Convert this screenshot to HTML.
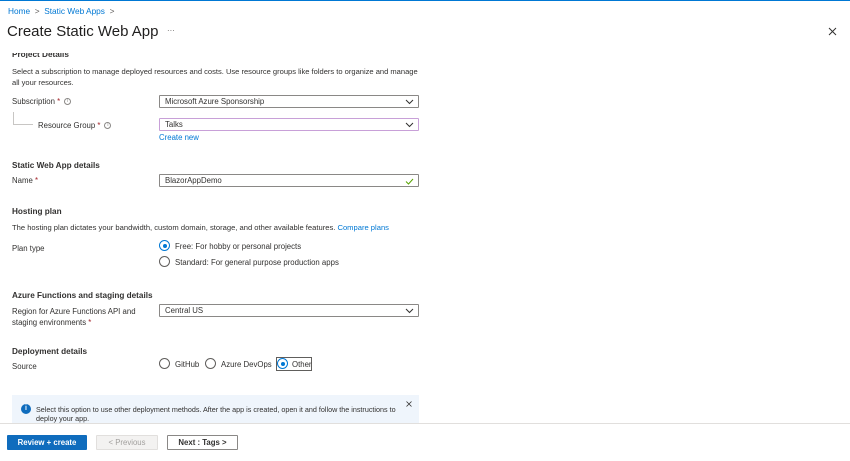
<!DOCTYPE html><html><head><style>
*{margin:0;padding:0;box-sizing:border-box}
body{width:850px;height:461px;overflow:hidden;background:#fff;font-family:"Liberation Sans",sans-serif;color:#323130;position:relative;font-size:7.8px}
.a{position:absolute;white-space:nowrap}
.h{font-weight:bold;font-size:8.2px}
.dd{position:absolute;left:159px;width:260px;height:13px;border:1px solid #8a8886;border-radius:1px;padding-left:5px;line-height:11px;font-size:7.8px}
.dd svg{position:absolute;right:4px;top:3px}
.r{position:absolute;width:11px;height:11px;border:1px solid #605e5c;border-radius:50%}
.r.on{border-color:#0078d4}
.r.on::after{content:"";position:absolute;left:2.5px;top:2.5px;width:4px;height:4px;border-radius:50%;background:#0078d4}
.lnk{color:#0078d4}
.req{color:#a4262c}
.i{display:inline-block;width:7px;height:7px;border:1px solid #8a8886;border-radius:50%;font-size:5px;line-height:5px;text-align:center;color:#8a8886;vertical-align:middle;margin-left:4px}
.btn{position:absolute;top:435px;height:15px;border:1px solid #8a8886;font-size:7.8px;line-height:13px;text-align:center;border-radius:1px}
</style></head><body>
<div class="a" style="left:0;top:0;width:850px;height:1px;background:#0078d4"></div>
<div class="a lnk" style="left:8px;top:6px;font-size:8.3px">Home &nbsp;<span style="color:#605e5c">&gt;</span>&nbsp; Static Web Apps &nbsp;<span style="color:#605e5c">&gt;</span></div>
<div class="a" style="left:7px;top:23px;font-size:15px;color:#201f1e">Create Static Web App</div>
<div class="a" style="left:167px;top:26px;color:#605e5c">···</div>
<svg class="a" style="left:828px;top:27px" width="9" height="9"><path d="M1 1L8 8M8 1L1 8" stroke="#323130" stroke-width="1"/></svg>
<div class="a h" style="left:12px;top:53px;height:5px;overflow:hidden;line-height:3px">Project Details</div>
<div class="a" style="left:12px;top:66px;line-height:11px;font-size:7.55px">Select a subscription to manage deployed resources and costs. Use resource groups like folders to organize and manage<br>all your resources.</div>
<div class="a" style="left:12px;top:97px">Subscription <span class="req">*</span><span class="i">i</span></div>
<div class="dd" style="top:95px">Microsoft Azure Sponsorship<svg width="9" height="6"><path d="M1 1l3.5 3.5L8 1" fill="none" stroke="#323130"/></svg></div>
<div class="a" style="left:13px;top:112px;width:1px;height:12px;background:#c8c6c4"></div>
<div class="a" style="left:13px;top:124px;width:20px;height:1px;background:#c8c6c4"></div>
<div class="a" style="left:38px;top:121px">Resource Group <span class="req">*</span><span class="i">i</span></div>
<div class="dd" style="top:118px;border-color:#c8a0d8">Talks<svg width="9" height="6"><path d="M1 1l3.5 3.5L8 1" fill="none" stroke="#323130"/></svg></div>
<div class="a lnk" style="left:159px;top:133px">Create new</div>
<div class="a h" style="left:12px;top:161px">Static Web App details</div>
<div class="a" style="left:12px;top:176px">Name <span class="req">*</span></div>
<div class="dd" style="top:174px">BlazorAppDemo<svg width="9" height="7"><path d="M1 3.5l2.5 2.5L8 1" fill="none" stroke="#57a300"/></svg></div>
<div class="a h" style="left:12px;top:207px">Hosting plan</div>
<div class="a" style="left:12px;top:223px;font-size:7.6px">The hosting plan dictates your bandwidth, custom domain, storage, and other available features. <span class="lnk">Compare plans</span></div>
<div class="a" style="left:12px;top:244px">Plan type</div>
<div class="r on" style="left:159px;top:240px"></div><div class="a" style="left:175px;top:242px">Free: For hobby or personal projects</div>
<div class="r" style="left:159px;top:256px"></div><div class="a" style="left:175px;top:258px">Standard: For general purpose production apps</div>
<div class="a h" style="left:12px;top:291px">Azure Functions and staging details</div>
<div class="a" style="left:12px;top:306px;line-height:11px">Region for Azure Functions API and<br>staging environments <span class="req">*</span></div>
<div class="dd" style="top:304px">Central US<svg width="9" height="6"><path d="M1 1l3.5 3.5L8 1" fill="none" stroke="#323130"/></svg></div>
<div class="a h" style="left:12px;top:347px">Deployment details</div>
<div class="a" style="left:12px;top:362px">Source</div>
<div class="r" style="left:159px;top:358px"></div><div class="a" style="left:175px;top:360px">GitHub</div>
<div class="r" style="left:205px;top:358px"></div><div class="a" style="left:221px;top:360px">Azure DevOps</div>
<div class="a" style="left:276px;top:357px;width:36px;height:14px;border:1px solid #605e5c"></div>
<div class="r on" style="left:277px;top:358px"></div><div class="a" style="left:292px;top:360px">Other</div>
<div class="a" style="left:12px;top:395px;width:407px;height:28px;background:#eff5fc"></div>
<div class="a" style="left:21px;top:404px;width:10px;height:10px;border-radius:50%;background:#0f6cbd;color:#fff;font-size:7px;font-weight:bold;text-align:center;line-height:10px">i</div>
<div class="a" style="left:36px;top:405px;line-height:9px;font-size:7.2px">Select this option to use other deployment methods. After the app is created, open it and follow the instructions to<br>deploy your app.</div>
<svg class="a" style="left:406px;top:401px" width="6" height="6"><path d="M0.5 0.5L5.5 5.5M5.5 0.5L0.5 5.5" stroke="#323130" stroke-width="0.8"/></svg>
<div class="a" style="left:0;top:423px;width:850px;height:1px;background:#e1dfdd"></div>
<div class="btn" style="left:7px;width:80px;background:#0f6cbd;border-color:#0f6cbd;color:#fff;font-weight:bold">Review + create</div>
<div class="btn" style="left:96px;width:62px;background:#f3f2f1;border-color:#e1dfdd;color:#a19f9d">&lt; Previous</div>
<div class="btn" style="left:167px;width:71px;background:#fff;font-weight:bold">Next : Tags &gt;</div>
</body></html>
